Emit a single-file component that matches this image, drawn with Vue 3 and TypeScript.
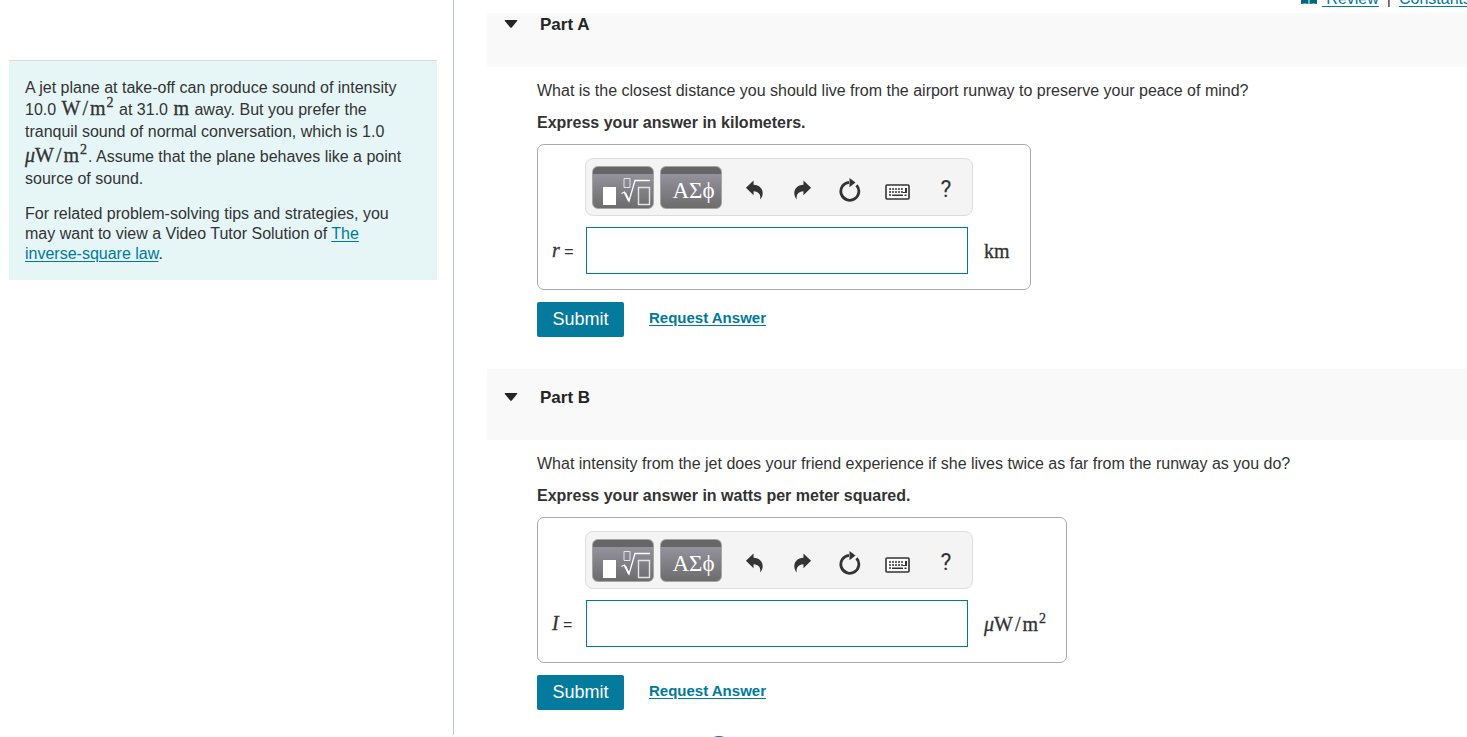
<script setup lang="ts">
import { ref } from 'vue'

interface Part {
  id: string
  title: string
  question: string
  instruction: string
  variable: string
  unit: 'km' | 'flux'
}

const parts: Part[] = [
  {
    id: 'a',
    title: 'Part A',
    question:
      'What is the closest distance you should live from the airport runway to preserve your peace of mind?',
    instruction: 'Express your answer in kilometers.',
    variable: 'r',
    unit: 'km',
  },
  {
    id: 'b',
    title: 'Part B',
    question:
      'What intensity from the jet does your friend experience if she lives twice as far from the runway as you do?',
    instruction: 'Express your answer in watts per meter squared.',
    variable: 'I',
    unit: 'flux',
  },
]

const answers = ref<Record<string, string>>({ a: '', b: '' })
</script>

<template>
  <div class="page">
    <aside class="side">
      <div class="problem">
        <p class="statement">
          A jet plane at take-off can produce sound of intensity 10.0
          <span class="math">W<span class="slash">/</span>m<sup>2</sup></span> at 31.0
          <span class="math">m</span> away. But you prefer the tranquil sound of normal conversation,
          which is 1.0
          <span class="math tall"><i>μ</i>W<span class="slash">/</span>m<sup>2</sup></span>. Assume that
          the plane behaves like a point source of sound.
        </p>
        <p class="tips">
          For related problem-solving tips and strategies, you may want to view a Video Tutor Solution of
          <a href="#">The inverse-square law</a>.
        </p>
      </div>
    </aside>

    <main class="main">
      <nav class="tools">
        <svg class="book" viewBox="0 0 16 14" aria-hidden="true">
          <path d="M0 1q4-2 7.500 1v11q-3.500-1-7.500 0zM16 1q-4-2-7.500 1v11q3.500-1 7.500 0z" fill="#00687f" />
        </svg>
        <a class="review" href="#">&nbsp;Review</a>
        <span class="bar">|</span>
        <a href="#">Constants</a>
      </nav>

      <section v-for="part in parts" :key="part.id" class="part">
        <header class="part-head">
          <svg class="caret" viewBox="0 0 14 8" aria-hidden="true">
            <path d="M1.200 0h11.600q1 0 .3.900L8 7.200q-1 1-2 0L.9.900Q.2 0 1.200 0z" fill="#252525" />
          </svg>
          <h2>{{ part.title }}</h2>
        </header>

        <div class="part-body">
          <p>{{ part.question }}</p>
          <p class="instruction">{{ part.instruction }}</p>

          <div class="answer">
            <div class="toolbar">
              <button class="palette" type="button" aria-label="Templates">
                <svg viewBox="1 1 60 41" fill="none" aria-hidden="true">
                  <path d="M11 21h13v18H11z" fill="#fff" />
                  <path d="M32 12.500h6v9h-6z" stroke="#e4e4e4" />
                  <path d="M29.500 27.500l3-1.500 4.500 9 6-20.500h15" stroke="#fff" stroke-width="1.300" />
                  <path d="M33 27l4 8" stroke="#fff" stroke-width="2" />
                  <path d="M46.500 21.500h11v17h-11z" stroke="#e4e4e4" stroke-width="1.400" />
                </svg>
              </button>
              <button class="palette greek" type="button">ΑΣϕ</button>
              <div class="tool-list">
                <button class="tool" type="button" aria-label="Undo">
                  <svg viewBox="0 0 20 20" aria-hidden="true">
                    <path d="M1 7.500L9 0v4.500c6 .2 10 4 9.600 9.500-.1 2.300-1 4.200-2.600 6 .8-5-1.500-8.600-7-8.700v4.200z" />
                  </svg>
                </button>
                <button class="tool" type="button" aria-label="Redo">
                  <svg viewBox="0 0 20 20" aria-hidden="true">
                    <path d="M19 7.500L11 0v4.500c-6 .2-10 4-9.600 9.500.1 2.300 1 4.200 2.600 6-.8-5 1.500-8.600 7-8.700v4.200z" />
                  </svg>
                </button>
                <button class="tool" type="button" aria-label="Reset">
                  <svg class="reset" viewBox="0 0 24 24" aria-hidden="true">
                    <path d="M11 4.300A9 9 0 1 0 18.500 7.200" fill="none" stroke="#333" stroke-width="2.800" />
                    <path d="M11.500 0l6 4.600-6 4.600z" />
                  </svg>
                </button>
                <button class="tool" type="button" aria-label="Keyboard">
                  <svg class="keyboard" viewBox="0 0 26 16" aria-hidden="true">
                    <rect x="1" y="1" width="23" height="14" rx="1" fill="#fff" stroke="#333" stroke-width="1.600" />
                    <path
                      d="M4 5h15M4 8h15M4 11h2"
                      fill="none"
                      stroke="#333"
                      stroke-width="1.700"
                      stroke-dasharray="2 1"
                    />
                    <path d="M20 4h2v5h-4v-1h2zM7 10.500h11v1.500H7zM19.500 10.500h2V12h-2z" />
                  </svg>
                </button>
                <button class="tool help" type="button" aria-label="Help">?</button>
              </div>
            </div>

            <label class="variable" :for="`answer-${part.id}`">
              <i>{{ part.variable }}</i> =
            </label>
            <input :id="`answer-${part.id}`" v-model="answers[part.id]" class="entry" type="text" />
            <span v-if="part.unit === 'km'" class="math unit">km</span>
            <span v-else class="math unit"><i>μ</i>W<span class="slash">/</span>m<sup>2</sup></span>
          </div>

          <div class="actions">
            <button class="submit" type="button">Submit</button>
            <a class="request" href="#">Request Answer</a>
          </div>
        </div>
      </section>

      <footer class="foot"><span class="badge"></span></footer>
    </main>
  </div>
</template>

<style>
body {
  background: #fff;
  overflow: hidden;
}
</style>

<style scoped>
.page {
  display: flex;
  height: 100vh;
  overflow: hidden;
  font: 16px/20px 'Liberation Sans', Arial, sans-serif;
  color: #333;
}
p,
h2 {
  margin: 0;
}
a {
  color: #007a9c;
  text-underline-offset: 2px;
}
button {
  font-family: inherit;
  border: 0;
  padding: 0;
  cursor: pointer;
}
.side {
  flex: 0 0 454px;
  box-sizing: border-box;
  padding: 60px 16px 0 9px;
  margin-bottom: 2px;
  border-right: 1px solid #bcc6d4;
}
.problem {
  padding: 16px 20px 16px 16px;
  border-top: 1px solid #dbdbdb;
  background: #e6f6f7;
}
.statement {
  line-height: 22px;
  margin-bottom: 14px;
}
.math {
  font-family: 'Liberation Serif', 'Times New Roman', serif;
  font-size: 20px;
  line-height: 20px;
  white-space: nowrap;
  -webkit-text-stroke: 0.3px #333;
}
.statement .math {
  margin: 0 1px;
  line-height: 16px;
}
.math sup {
  font-size: 14px;
  line-height: 0;
  margin-left: 1px;
}
.slash {
  margin: 0 2px;
}
.statement .tall {
  display: inline-block;
  margin-left: 0;
  line-height: 24px;
}
.main {
  flex: 1;
  min-width: 0;
  padding-left: 33px;
}
.tools {
  display: flex;
  justify-content: flex-end;
  align-items: flex-end;
  box-sizing: border-box;
  height: 13px;
  padding-bottom: 4px;
  margin-right: -4px;
}
.book {
  width: 16px;
  height: 14px;
  margin: 0 5px 4px 0;
}
.bar {
  margin: 0 8px;
  color: #333;
}
.part-head {
  display: flex;
  align-items: flex-start;
  box-sizing: border-box;
  height: 71px;
  padding: 19px 17px 0;
  background: #f9f9f9;
}
.part:nth-of-type(1) .part-head {
  height: 54px;
  padding-top: 2px;
}
.caret {
  width: 14px;
  height: 8px;
  margin: 5px 22px 0 0;
}
h2 {
  font-size: 17px;
  line-height: 20px;
  color: #252525;
}
.part-body {
  padding: 14px 16px 32px 50px;
}
.part:nth-of-type(2) .part-body {
  padding-bottom: 0;
}
.instruction {
  margin: 12px 0 11px;
  font-weight: bold;
}
.answer {
  display: grid;
  grid-template-columns: 34px 382px auto;
  align-items: center;
  width: max-content;
  padding: 13px 20px 15px 14px;
  border: 1px solid #aaa;
  border-radius: 7px;
}
.toolbar {
  grid-column: 2 / 4;
  justify-self: start;
  display: flex;
  align-items: flex-start;
  box-sizing: border-box;
  width: 388px;
  height: 58px;
  margin: 0 0 11px -1px;
  padding: 7px 6px 0;
  border: 1px solid #ddd;
  border-radius: 8px;
  background: #f4f4f4;
}
.palette {
  box-sizing: border-box;
  flex: none;
  width: 62px;
  height: 43px;
  margin-right: 6px;
  border: 1px solid #a5a5a5;
  border-radius: 6px;
  background: linear-gradient(#666 0 7px, #94929d 7px, #6c6c6c 100%);
  color: #fff;
}
.palette svg {
  display: block;
  width: 60px;
  height: 41px;
}
.greek {
  padding: 7px 0 0 5px;
  font: 23px/24px 'Liberation Serif', serif;
}
.tool-list {
  display: flex;
  margin-left: 2px;
}
.tool {
  display: grid;
  place-items: center;
  flex: none;
  width: 48px;
  height: 48px;
  background: none;
  color: #333;
  fill: #333;
}
.tool svg {
  width: 19px;
  height: 20px;
}
.tool .reset {
  width: 24px;
  height: 24px;
}
.tool .keyboard {
  width: 26px;
  height: 16px;
  margin-top: 4px;
}
.help {
  font: 23px/24px Roboto, sans-serif;
}
.variable i {
  font: italic 20px/20px 'Liberation Serif', serif;
  -webkit-text-stroke: 0.3px #333;
}
.entry {
  box-sizing: border-box;
  width: 100%;
  height: 47px;
  padding: 0 8px;
  border: 1px solid #007a9c;
  background: #fff;
  font: inherit;
  outline: 0;
}
.unit {
  padding-left: 16px;
}
.actions {
  display: flex;
  align-items: flex-start;
  gap: 25px;
  margin-top: 12px;
}
.submit {
  width: 87px;
  height: 35px;
  border-radius: 2px;
  background: #047a9c;
  color: #fff;
  font-size: 18px;
}
.request {
  font-size: 15px;
  font-weight: bold;
  line-height: 32px;
}
.foot {
  padding: 26px 0 0 219px;
}
.badge {
  display: block;
  width: 26px;
  height: 26px;
  border-radius: 50%;
  background: #047a9c;
}
</style>
